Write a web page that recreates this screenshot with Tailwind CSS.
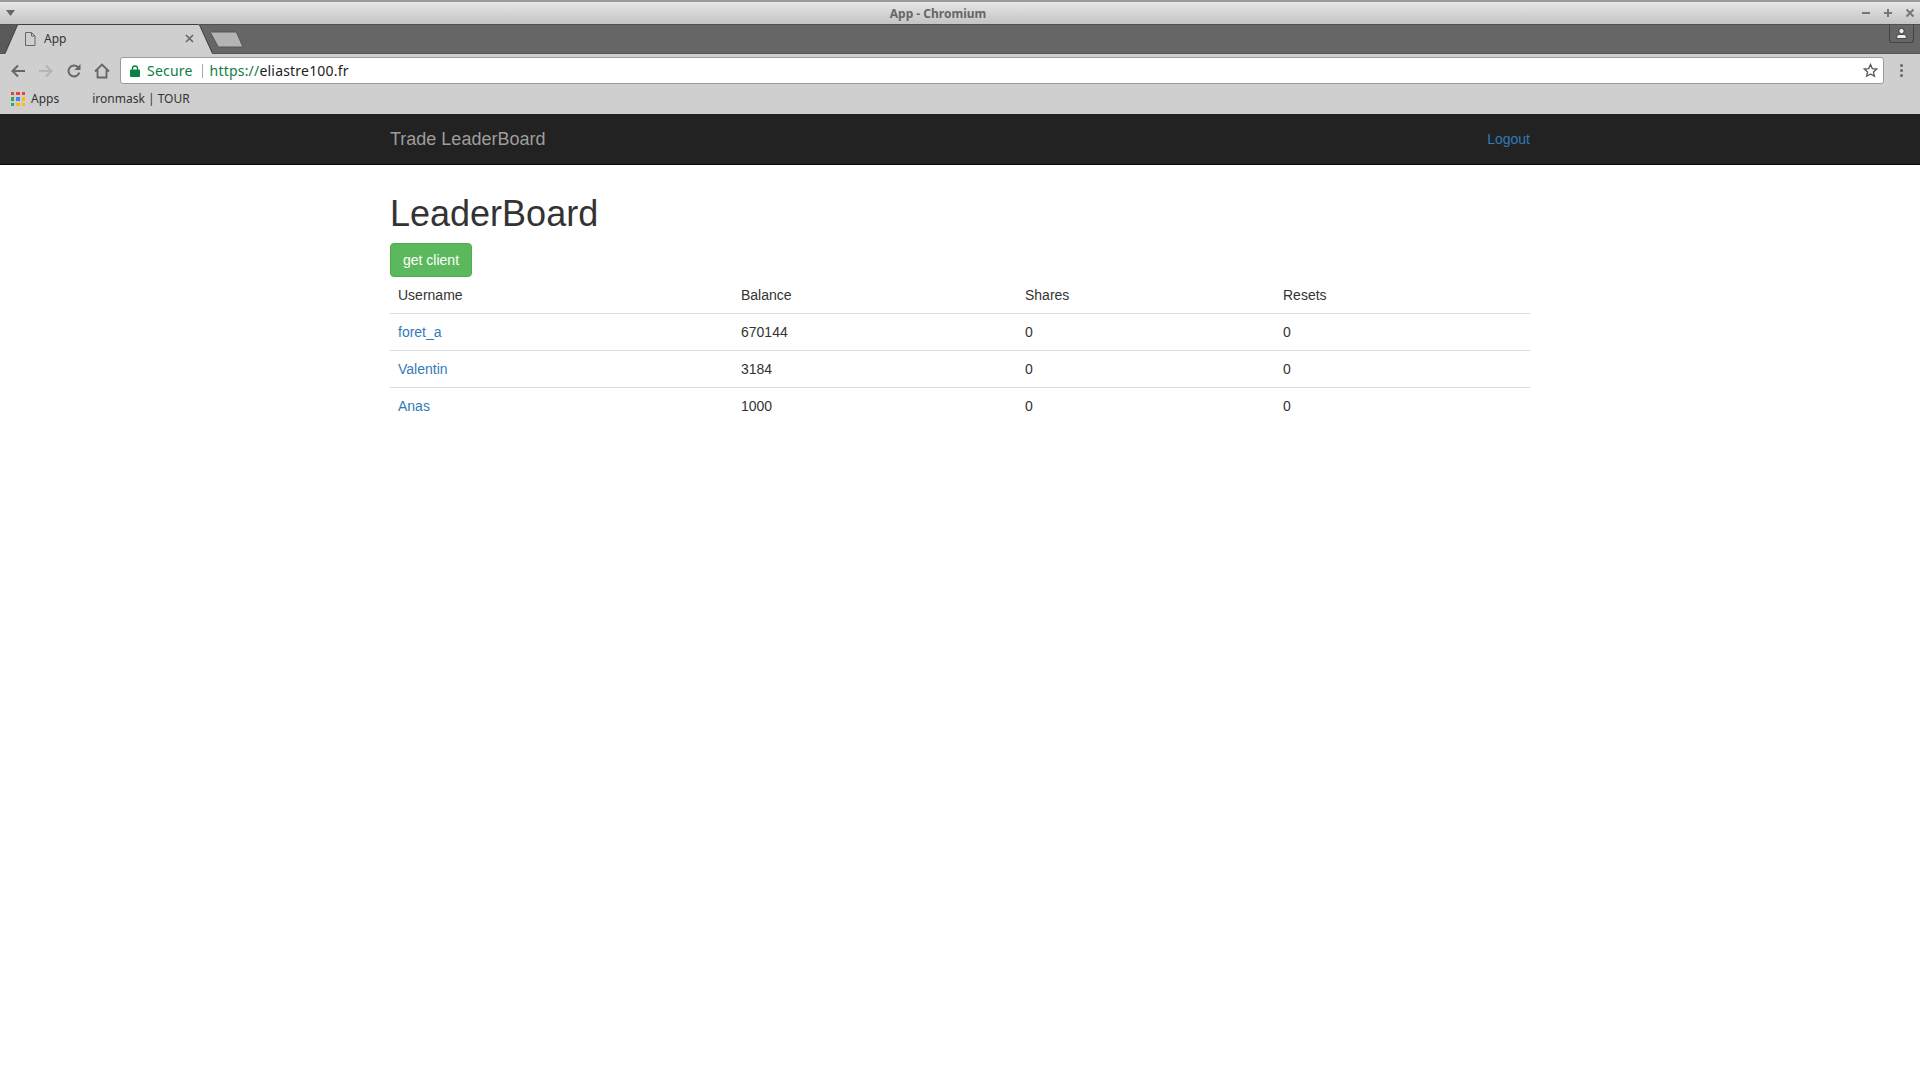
<!DOCTYPE html>
<html>
<head>
<meta charset="utf-8" />
<title>App - Chromium</title>
<script src="https://cdn.jsdelivr.net/npm/@tailwindcss/browser@4"></script>
</head>
<body class="bg-white h-[1080px] overflow-hidden font-['Liberation_Sans',sans-serif] text-[14px] leading-5 text-[#333]">

<!-- title bar -->
<div class="h-[24px] border-t-2 border-[#9a9a9a] bg-gradient-to-b from-[#e6e6e6] to-[#c4c4c4] flex items-center justify-between pl-[6px] pr-[5px] relative">
  <svg width="9" height="6" viewBox="0 0 9 6"><path d="M0 0h9L4.500 6z" fill="#666"/></svg>
  <div class="absolute left-0 w-[1876px] top-[4px] text-center font-['Noto_Sans',sans-serif] font-bold text-[12px] leading-4 text-[#666]">App - Chromium</div>
  <div class="flex items-center gap-[12px]">
    <svg width="10" height="10" viewBox="0 0 10 10"><path d="M1 5h8" stroke="#777" stroke-width="2"/></svg>
    <svg width="10" height="10" viewBox="0 0 10 10"><path d="M1 5h8M5 1v8" stroke="#777" stroke-width="2"/></svg>
    <svg width="10" height="10" viewBox="0 0 10 10"><path d="M1.500 1.500l7 7M8.500 1.500l-7 7" stroke="#777" stroke-width="2"/></svg>
  </div>
</div>

<!-- tab strip -->
<div class="h-[29px] bg-[#666] relative z-10 border-t border-[#505050]">
  <svg class="absolute left-0 top-[-1px]" width="250" height="30" viewBox="0 0 250 30">
    <path d="M0 1H17L5 28.500H0z" fill="#595959"/>
    <path d="M5 30L17.500 1q0.500-1 2-1H198q1 0 1.500 1L212.500 30z" fill="#cfcfcf"/>
    <path d="M5 29.500L17.500 1q.5-.5 1.500-.5H198.500q.5 0 1 .5L212.500 29.500" stroke="#3f3f3f" stroke-width="1" fill="none"/>
    <path d="M210.500 8.500q0-.5 .5-.5h24.500q.5 0 1 .5l6 13.500q.5 1-1 1h-22.500q-.5 0-1-.5z" fill="#b4b4b4" stroke="#555"/>
  </svg>
  <div class="absolute left-[24px] top-[6px] flex items-center gap-[8px] font-['Noto_Sans',sans-serif] text-[12px] leading-4 text-[#333]">
    <svg width="12" height="14" viewBox="0 0 12 14"><path d="M1.500 .5h6l3.500 3.500v9.500h-9.500zM7.500 .5v3.500h3.500" fill="none" stroke="#666"/></svg>
    <span>App</span>
  </div>
  <svg class="absolute left-[185px] top-[9px]" width="9" height="9" viewBox="0 0 9 9"><path d="M1 1l7 7M8 1l-7 7" stroke="#666" stroke-width="1.600"/></svg>
  <div class="absolute right-[6px] top-[-1px] w-[25px] h-[19px] border border-t-0 border-[#444] rounded-b-[3px] flex items-center justify-center">
    <svg width="11" height="11" viewBox="0 0 11 11"><circle cx="5.500" cy="3" r="2.600" fill="#eee" stroke="#222" stroke-width=".7"/><path d="M.8 10.500V8.500q0-1.500 2-2h5.400q2 .5 2 2v2z" fill="#eee" stroke="#222" stroke-width=".7"/></svg>
  </div>
</div>

<!-- toolbar -->
<div class="h-[32px] bg-[#cfcfcf] flex items-center pl-[10px] pt-[2px] border-t border-[#555]">
  <svg width="16" height="16" viewBox="0 0 16 16"><path d="M15 8H3M8 2.500L2.500 8 8 13.500" fill="none" stroke="#666" stroke-width="2"/></svg>
  <svg class="ml-[12px]" width="16" height="16" viewBox="0 0 16 16"><path d="M1 8h12M8 2.500L13.500 8 8 13.500" fill="none" stroke="#b4b4b4" stroke-width="2"/></svg>
  <svg class="ml-[12px]" width="16" height="16" viewBox="0 0 16 16"><path d="M13.300 9.500A5.500 5.500 0 1 1 12 4.200" fill="none" stroke="#666" stroke-width="2"/><path d="M14.500 1v6h-6z" fill="#666"/></svg>
  <svg class="ml-[12px]" width="16" height="16" viewBox="0 0 16 16"><path d="M1 8.500L8 1.500l7 7M3.500 7v7.500h9V7" fill="none" stroke="#666" stroke-width="1.800"/></svg>
  <div class="ml-[10px] w-[1764px] h-[27px] bg-white border border-[#9a9a9a] rounded-[3px] flex items-center pl-[9px] font-['Noto_Sans',sans-serif] text-[14px] tracking-[0.2px]">
    <svg width="10" height="12" viewBox="0 0 10 12"><path d="M2.500 5V3.500a2.500 2.500 0 0 1 5 0V5" fill="none" stroke="#0b8043" stroke-width="1.300"/><rect y="4.500" width="10" height="7.500" rx="1" fill="#0b8043"/></svg>
    <span class="ml-[7px] text-[#0b8043]">Secure</span>
    <span class="ml-[9px] w-px h-[14px] bg-[#aaa]"></span>
    <span class="ml-[7px] text-[#0b8043]">https://<span class="text-[#222]">eliastre100.fr</span></span>
    <svg class="ml-auto mr-[5px]" width="15" height="15" viewBox="0 0 15 15"><path d="M7.500 1.500l1.800 4.100 4.400.4-3.300 2.900 1 4.300-3.900-2.300-3.900 2.300 1-4.300L1.300 6l4.400-.4z" fill="none" stroke="#555" stroke-width="1.300"/></svg>
  </div>
  <div class="ml-[16px] flex flex-col gap-[2px]">
    <span class="w-[3px] h-[3px] bg-[#666] rounded-full"></span>
    <span class="w-[3px] h-[3px] bg-[#666] rounded-full"></span>
    <span class="w-[3px] h-[3px] bg-[#666] rounded-full"></span>
  </div>
</div>

<!-- bookmarks bar -->
<div class="h-[29px] bg-[#cfcfcf] flex items-center pl-[11px] pb-[1px] font-['Noto_Sans',sans-serif] text-[12px] text-[#333]">
  <div class="grid grid-cols-3 gap-[2px] w-[14px] h-[14px] shrink-0">
    <span class="bg-[#ea4335]"></span><span class="bg-[#ea4335]"></span><span class="bg-[#ea4335]"></span>
    <span class="bg-[#34a853]"></span><span class="bg-[#4285f4]"></span><span class="bg-[#fbbc05]"></span>
    <span class="bg-[#34a853]"></span><span class="bg-[#fbbc05]"></span><span class="bg-[#fbbc05]"></span>
  </div>
  <span class="ml-[6px]">Apps</span>
  <span class="ml-[33px]">ironmask | TOUR</span>
</div>

<!-- navbar -->
<nav class="h-[51px] bg-[#222] border-b border-[#080808]">
  <div class="w-[1140px] mx-auto h-full flex items-center justify-between">
    <a class="text-[18px] text-[#9d9d9d]">Trade LeaderBoard</a>
    <a class="text-[#337ab7]">Logout</a>
  </div>
</nav>

<!-- content -->
<main class="w-[1140px] mx-auto pt-[29px]">
  <h1 class="text-[36px] leading-[40px] mb-[9px]">LeaderBoard</h1>
  <button class="h-[34px] px-[12px] bg-[#5cb85c] border border-[#4cae4c] rounded text-white block">get client</button>
  <table class="w-full table-fixed border-collapse">
    <thead>
      <tr class="border-b border-[#ddd] h-[36px] text-left">
        <th class="w-[343px] px-2 pt-px font-normal">Username</th>
        <th class="w-[284px] px-2 pt-px font-normal">Balance</th>
        <th class="w-[258px] px-2 pt-px font-normal">Shares</th>
        <th class="px-2 pt-px font-normal">Resets</th>
      </tr>
    </thead>
    <tbody>
      <tr class="border-b border-[#ddd] h-[37px]">
        <td class="px-2"><a class="text-[#337ab7]">foret_a</a></td><td class="px-2">670144</td><td class="px-2">0</td><td class="px-2">0</td>
      </tr>
      <tr class="border-b border-[#ddd] h-[37px]">
        <td class="px-2"><a class="text-[#337ab7]">Valentin</a></td><td class="px-2">3184</td><td class="px-2">0</td><td class="px-2">0</td>
      </tr>
      <tr class="h-[37px]">
        <td class="px-2"><a class="text-[#337ab7]">Anas</a></td><td class="px-2">1000</td><td class="px-2">0</td><td class="px-2">0</td>
      </tr>
    </tbody>
  </table>
</main>

</body>
</html>
